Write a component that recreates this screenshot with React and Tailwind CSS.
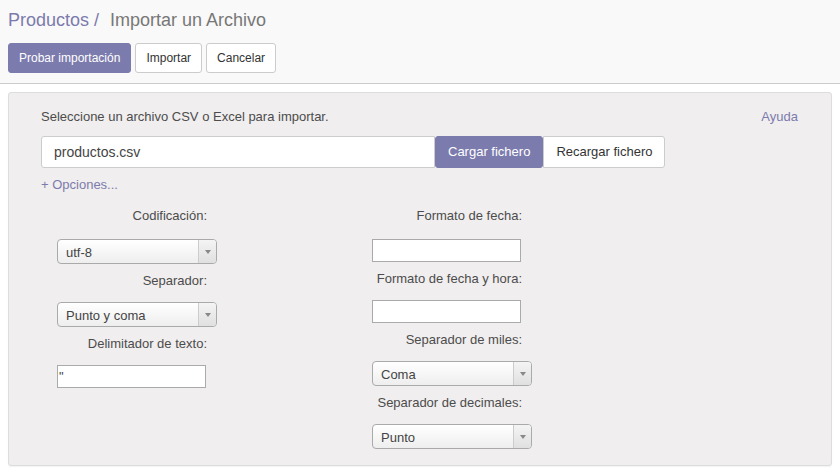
// App.jsx
import React from "react";

const font = { fontFamily: '"Liberation Sans", Arial, sans-serif' };

function Select({ value }) {
  return (
    <div className="flex h-[25px] w-[160px] rounded-[4px] border border-[#aaaaaa] bg-linear-to-b from-white to-[#eeeeee] text-[13px] text-[#444444] overflow-hidden">
      <div className="flex-1 pl-[8px] leading-[25px]">{value}</div>
      <div className="flex w-[18px] items-center justify-center border-l border-[#cccccc] bg-linear-to-b from-[#f4f4f4] to-[#e0e0e0]">
        <svg width="6" height="4" viewBox="0 0 6 4">
          <path d="M0 0 L6 0 L3 4 Z" fill="#888888" />
        </svg>
      </div>
    </div>
  );
}

function TextBox({ value = "" }) {
  return (
    <div className="h-[23px] w-[149px] border border-[#aaaaaa] bg-white pl-[1px] text-[13px] leading-[21px] text-[#444444]">
      {value}
    </div>
  );
}

function Label({ children, first }) {
  return (
    <div
      className={
        (first ? "h-[40px] " : "h-[38px] ") +
        "pt-[8px] pr-[10px] text-right text-[13px] leading-[18px] text-[#4c4c4c]"
      }
    >
      {children}
    </div>
  );
}

export default function App() {
  return (
    <div className="min-h-[476px] w-[840px] bg-white" style={font}>
      {/* Control panel */}
      <div className="border-b border-[#cccccc] bg-[#f9f9f9] px-[8px] pt-[8px] pb-[10px]">
        <div className="flex h-[24px] items-center text-[18px] leading-[24px]">
          <span className="text-[#7c7bad]">Productos</span>
          <span className="ml-[5px] text-[#7c7bad]">/</span>
          <span className="ml-[11px] text-[#777777]">Importar un Archivo</span>
        </div>
        <div className="mt-[11px] flex gap-[4px]">
          <button className="h-[30px] rounded-[3px] border border-[#7c7bad] bg-[#7c7bad] px-[10px] text-[12px] text-white">
            Probar importación
          </button>
          <button className="h-[30px] rounded-[3px] border border-[#cccccc] bg-white px-[10px] text-[12px] text-[#333333]">
            Importar
          </button>
          <button className="h-[30px] rounded-[3px] border border-[#cccccc] bg-white px-[10px] text-[12px] text-[#333333]">
            Cancelar
          </button>
        </div>
      </div>

      {/* Import panel */}
      <div className="mx-[8px] mt-[8px] rounded-[3px] border border-[#dddddd] bg-[#f0eeee] pt-[15px] pr-[33px] pb-[16px] pl-[32px] shadow-[0_1px_1px_rgba(0,0,0,0.05)]">
        <div className="flex justify-between text-[13px] leading-[18px]">
          <span className="text-[#4c4c4c]">Seleccione un archivo CSV o Excel para importar.</span>
          <span className="text-[#7c7bad]">Ayuda</span>
        </div>

        <div className="mt-[10px] flex h-[32px]">
          <div className="w-[394px] rounded-l-[3px] border border-[#cccccc] bg-white pl-[12px] text-[14px] leading-[30px] text-[#444444]">
            productos.csv
          </div>
          <button className="rounded-[3px] border border-[#7c7bad] bg-[#7c7bad] px-[12px] text-[13px] text-white">
            Cargar fichero
          </button>
          <button className="rounded-r-[3px] border border-[#cccccc] bg-white px-[12px] text-[13px] text-[#333333]">
            Recargar fichero
          </button>
        </div>

        <div className="mt-[8px] text-[13px] leading-[18px] text-[#7c7bad]">+ Opciones...</div>

        <div className="mt-[5px] flex">
          <div className="ml-[16px] w-[160px]">
            <Label first>Codificación:</Label>
            <Select value="utf-8" />
            <Label>Separador:</Label>
            <Select value="Punto y coma" />
            <Label>Delimitador de texto:</Label>
            <TextBox value={'"'} />
          </div>
          <div className="ml-[155px] w-[160px]">
            <Label first>Formato de fecha:</Label>
            <TextBox />
            <Label>Formato de fecha y hora:</Label>
            <TextBox />
            <Label>Separador de miles:</Label>
            <Select value="Coma" />
            <Label>Separador de decimales:</Label>
            <Select value="Punto" />
          </div>
        </div>
      </div>
    </div>
  );
}
